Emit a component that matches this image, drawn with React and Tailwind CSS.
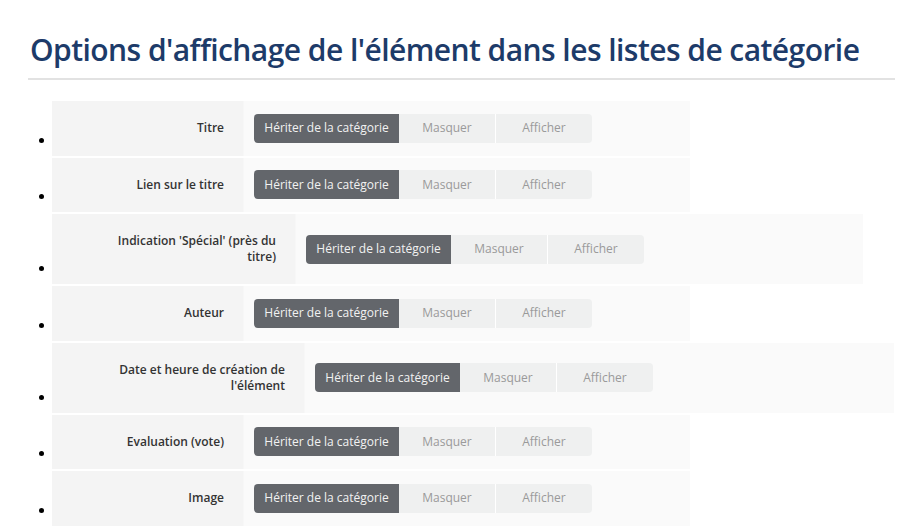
import React from 'react';

const rows = [
  { label: 'Titre', labelW: 191, ctrlW: 447, h: 54.5 },
  { label: 'Lien sur le titre', labelW: 191, ctrlW: 447, h: 54.5 },
  { label: "Indication 'Spécial' (près du titre)", labelW: 243, ctrlW: 568, h: 70 },
  { label: 'Auteur', labelW: 191, ctrlW: 447, h: 54.5 },
  { label: "Date et heure de création de l'élément", labelW: 252, ctrlW: 590, h: 70 },
  { label: 'Evaluation (vote)', labelW: 191, ctrlW: 447, h: 54.5 },
  { label: 'Image', labelW: 191, ctrlW: 447, h: 54.5 },
];

function Choice() {
  return (
    <div className="flex h-[29px] rounded-[4px] overflow-hidden text-[12px]">
      <div className="w-[145px] flex items-center justify-center bg-[#63666b] text-[#f2f2f2]">
        Hériter de la catégorie
      </div>
      <div className="w-[97px] flex items-center justify-center bg-[#eff0f0] text-[#9a9a9a] border-r border-white">
        Masquer
      </div>
      <div className="w-[96px] flex items-center justify-center bg-[#eff0f0] text-[#9a9a9a]">
        Afficher
      </div>
    </div>
  );
}

export default function App() {
  return (
    <div className="bg-white w-[900px] h-[527px] overflow-hidden font-['Open_Sans',sans-serif]">
      <div className="pl-[28px] pr-[5px] pt-[30px]">
        <h1 className="pl-[2px] text-[30px] leading-[40px] font-semibold text-[#1d3b69] tracking-[-0.55px] whitespace-nowrap">
          Options d'affichage de l'élément dans les listes de catégorie
        </h1>
        <div className="mt-[8px] h-[2px] bg-[#e2e2e2]" />
      </div>
      <ul className="mt-[21px] flex flex-col gap-[2px]">
        {rows.map((row) => (
          <li key={row.label} className="flex items-end">
            <div className="w-[52px] flex justify-end pr-[8px] pb-[13px]">
              <span className="w-[5px] h-[5px] rounded-full bg-black" />
            </div>
            <div className="flex" style={{ height: row.h }}>
              <div
                className="bg-[#f4f4f4] flex items-center justify-end pr-[19px] pl-[10px] text-right text-[12px] leading-[16px] font-semibold text-[#333]"
                style={{ width: row.labelW }}
              >
                <span className="max-w-[172px]">{row.label}</span>
              </div>
              <div
                className="bg-[#fafafa] flex items-center pl-[10px] border-l border-[#f7f7f7]"
                style={{ width: row.ctrlW }}
              >
                <Choice />
              </div>
            </div>
          </li>
        ))}
      </ul>
    </div>
  );
}
